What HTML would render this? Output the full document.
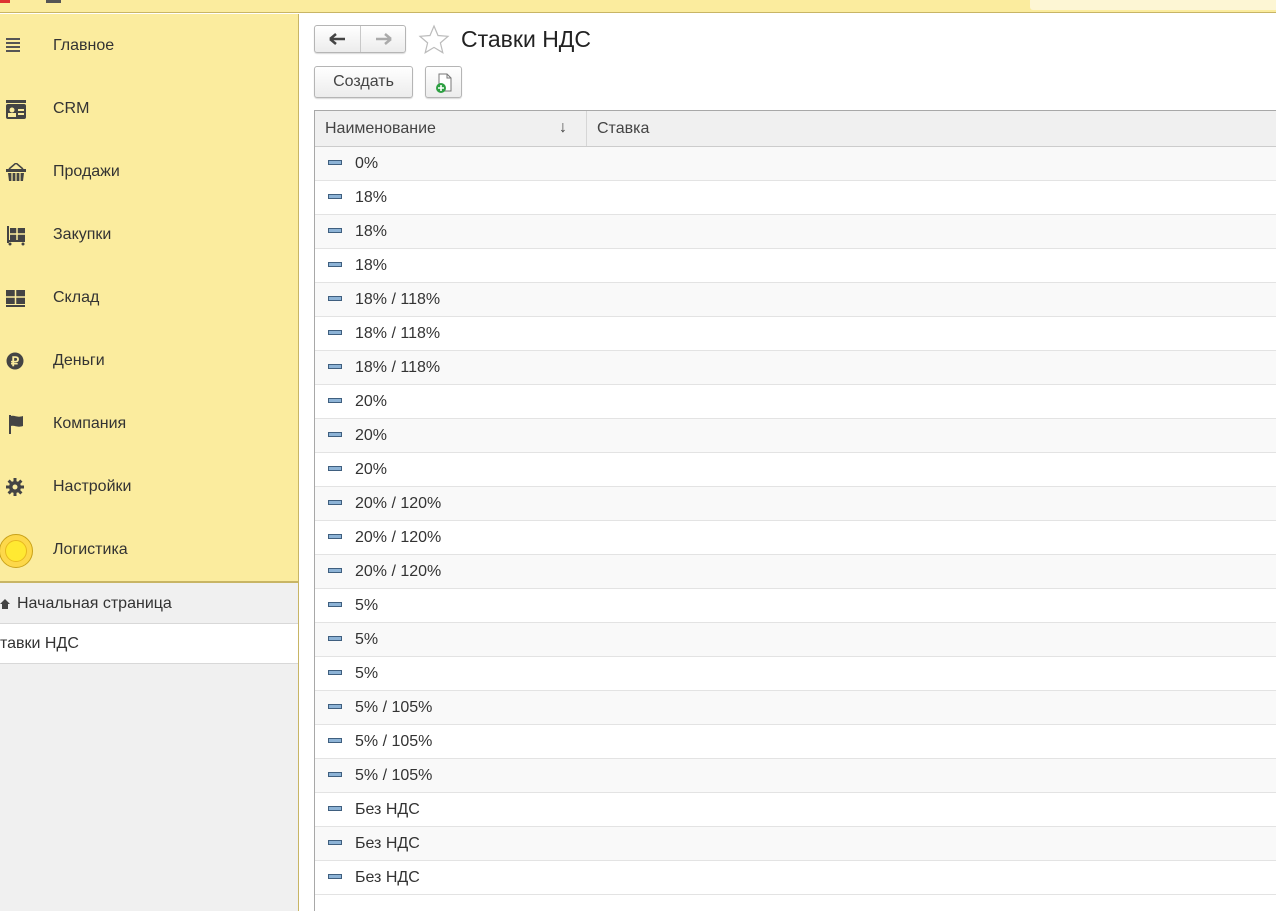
<!DOCTYPE html>
<html><head><meta charset="utf-8"><style>
*{margin:0;padding:0;box-sizing:border-box}
body{width:1276px;height:911px;overflow:hidden;background:#fff;font-family:"Liberation Sans",Arial,sans-serif;color:#333;position:relative}
#top{position:absolute;left:0;top:0;width:1276px;height:13px;background:#fbec9e;border-bottom:1px solid #c8b565}
#top .s{position:absolute;right:0;top:0;width:246px;height:10px;background:#fdf6d4;border-radius:0 0 0 3px}
#side{position:absolute;left:0;top:14px;width:299px;height:897px;background:#f0f0f0;border-right:1px solid #c8b565}
#menu{background:#fbec9e;height:569px;border-bottom:2px solid #c8b565;padding-top:2px}
.it{height:63px;position:relative;font-size:16px;color:#333}
.it span{position:absolute;left:53px;top:21px}
.it svg{position:absolute;left:6px;top:21px}
.hp{height:41px;border-bottom:1px solid #d8d8d8;font-size:16px;padding:12px 0 0 17px;position:relative}
.cur{height:40px;background:#fff;border-bottom:1px solid #d8d8d8;font-size:16px;padding:11px 0 0 0}
.btn{position:absolute;border:1px solid #b5b5b5;border-radius:3px;background:linear-gradient(#fff,#ececec);box-shadow:0 1px 1px rgba(0,0,0,.15)}
#tbl{position:absolute;left:314px;top:110px;width:962px;border-left:1px solid #a8a8a8;border-top:1px solid #a8a8a8;height:801px}
.hd{height:36px;background:#f0f0f0;border-bottom:1px solid #ccc;position:relative;font-size:16px;color:#444}
.r{height:34px;border-bottom:1px solid #e3e3e3;position:relative;font-size:16px;color:#333}
.r i{position:absolute;left:13px;top:13px;width:14px;height:5px;background:#8db3d6;border:1px solid #3f5f7f}
.r b{font-weight:normal;position:absolute;left:40px;top:8px}
</style></head><body>
<div id="top"><div class="s"></div><div style="position:absolute;left:0;top:0;width:10px;height:3px;background:#d33"></div><div style="position:absolute;left:46px;top:0;width:15px;height:3px;background:#555"></div></div>
<div id="side"><div id="menu">
<div class="it"><svg width="14" height="16"><rect y="1" width="14" height="2" fill="#555"/><rect y="5" width="14" height="2" fill="#555"/><rect y="9" width="14" height="2" fill="#555"/><rect y="13" width="14" height="2" fill="#555"/></svg><span>Главное</span></div>
<div class="it"><svg width="20" height="20"><rect x="0" y="0" width="20" height="3" fill="#444"/><rect y="4" width="20" height="15" rx="2" fill="#444"/><circle cx="6" cy="10" r="2.5" fill="#fbec9e"/><rect x="2" y="13" width="8" height="4" fill="#fbec9e"/><rect x="12" y="9" width="6" height="2" fill="#fbec9e"/><rect x="12" y="13" width="6" height="2" fill="#fbec9e"/></svg><span>CRM</span></div>
<div class="it"><svg width="20" height="20"><path d="M3 6 L10 0 L17 6" stroke="#444" fill="none" stroke-width="1.5"/><rect x="0" y="6" width="20" height="3" fill="#444"/><path d="M2 10h16l-1 8H3z" fill="#444"/><path d="M6 10v8M10 10v8M14 10v8" stroke="#fbec9e" stroke-width="1.2"/></svg><span>Продажи</span></div>
<div class="it"><svg width="20" height="20"><rect x="1" y="0" width="2" height="17" fill="#444"/><rect x="4" y="2" width="15" height="12" fill="#444"/><path d="M4 8h15M11 2v12" stroke="#fbec9e" stroke-width="1.5"/><rect x="1" y="14" width="18" height="2" fill="#444"/><circle cx="4" cy="18" r="1.5" fill="#444"/><circle cx="17" cy="18" r="1.5" fill="#444"/></svg><span>Закупки</span></div>
<div class="it"><svg width="20" height="20"><rect x="0" y="1" width="19" height="14" fill="#444"/><path d="M0 8h19M9.5 1v14" stroke="#fbec9e" stroke-width="1.5"/><rect y="16" width="19" height="2" fill="#444"/></svg><span>Склад</span></div>
<div class="it"><svg width="20" height="20"><circle cx="9" cy="9" r="8.5" fill="#444"/><text x="9" y="14" font-size="13" font-weight="bold" fill="#fbec9e" text-anchor="middle" font-family="Liberation Sans">₽</text></svg><span>Деньги</span></div>
<div class="it"><svg width="20" height="20"><rect x="3" y="0" width="2" height="19" fill="#444"/><path d="M5 1c4-1 6 2 12 0v10c-6 2-8-1-12 0z" fill="#444"/></svg><span>Компания</span></div>
<div class="it"><svg width="20" height="20"><g transform="translate(9 9)" fill="#444"><circle r="6"/><g stroke="#444" stroke-width="3"><path d="M0-9V9M-9 0H9M-6.4-6.4L6.4 6.4M-6.4 6.4L6.4-6.4"/></g><circle r="2.5" fill="#fbec9e"/></g></svg><span>Настройки</span></div>
<div class="it"><div style="position:absolute;left:-1px;top:14px;width:34px;height:34px;border-radius:50%;background:#fdd84a;border:1px solid #c9a21a"><div style="position:absolute;left:5px;top:5px;width:22px;height:22px;border-radius:50%;background:#ffe932;border:1px solid #e8b91f"></div></div><span>Логистика</span></div>
</div>
<div class="hp"><svg width="10" height="10" style="position:absolute;left:0;top:16px"><path d="M0 5L5 0L10 5H8V10H2V5z" fill="#444"/></svg>Начальная страница</div>
<div class="cur">тавки НДС</div>
</div>
<div class="btn" style="left:314px;top:25px;width:92px;height:28px"><div style="position:absolute;left:45px;top:0;width:1px;height:26px;background:#c8c8c8"></div>
<svg width="92" height="26" style="position:absolute;left:0;top:0"><path d="M15 13h15M15 13l6-5M15 13l6 5" stroke="#444" stroke-width="2.5" fill="none"/><path d="M61 13h15M76 13l-6-5M76 13l-6 5" stroke="#aaa" stroke-width="2.5" fill="none"/></svg></div>
<svg width="32" height="30" style="position:absolute;left:418px;top:24px"><path d="M16 2l4 9.5 10 .8-7.6 6.6 2.4 9.8L16 23.4l-8.8 5.3 2.4-9.8L2 12.3l10-.8z" fill="none" stroke="#bbb" stroke-width="1.2"/></svg>
<div style="position:absolute;left:461px;top:26px;font-size:23px;color:#222">Ставки НДС</div>
<div class="btn" style="left:314px;top:66px;width:99px;height:32px;font-size:16px;color:#444;text-align:center;line-height:30px">Создать</div>
<div class="btn" style="left:425px;top:66px;width:37px;height:32px"><svg width="37" height="32"><path d="M13 7h8l4 4v13H13z" fill="#fff" stroke="#777"/><path d="M21 7v4h4" fill="none" stroke="#777"/><circle cx="15" cy="21" r="5" fill="#2ea043"/><path d="M15 18v6M12 21h6" stroke="#fff" stroke-width="1.6"/></svg></div>
<div id="tbl">
<div class="hd"><span style="position:absolute;left:10px;top:9px">Наименование</span><span style="position:absolute;left:244px;top:8px">↓</span><div style="position:absolute;left:271px;top:0;width:1px;height:35px;background:#d6d6d6"></div><span style="position:absolute;left:282px;top:9px">Ставка</span></div>
<div>
<div class="r" style="background:#f9f9f9"><i></i><b>0%</b></div>
<div class="r" style="background:#fff"><i></i><b>18%</b></div>
<div class="r" style="background:#f9f9f9"><i></i><b>18%</b></div>
<div class="r" style="background:#fff"><i></i><b>18%</b></div>
<div class="r" style="background:#f9f9f9"><i></i><b>18% / 118%</b></div>
<div class="r" style="background:#fff"><i></i><b>18% / 118%</b></div>
<div class="r" style="background:#f9f9f9"><i></i><b>18% / 118%</b></div>
<div class="r" style="background:#fff"><i></i><b>20%</b></div>
<div class="r" style="background:#f9f9f9"><i></i><b>20%</b></div>
<div class="r" style="background:#fff"><i></i><b>20%</b></div>
<div class="r" style="background:#f9f9f9"><i></i><b>20% / 120%</b></div>
<div class="r" style="background:#fff"><i></i><b>20% / 120%</b></div>
<div class="r" style="background:#f9f9f9"><i></i><b>20% / 120%</b></div>
<div class="r" style="background:#fff"><i></i><b>5%</b></div>
<div class="r" style="background:#f9f9f9"><i></i><b>5%</b></div>
<div class="r" style="background:#fff"><i></i><b>5%</b></div>
<div class="r" style="background:#f9f9f9"><i></i><b>5% / 105%</b></div>
<div class="r" style="background:#fff"><i></i><b>5% / 105%</b></div>
<div class="r" style="background:#f9f9f9"><i></i><b>5% / 105%</b></div>
<div class="r" style="background:#fff"><i></i><b>Без НДС</b></div>
<div class="r" style="background:#f9f9f9"><i></i><b>Без НДС</b></div>
<div class="r" style="background:#fff"><i></i><b>Без НДС</b></div>
</div></div>
</body></html>
